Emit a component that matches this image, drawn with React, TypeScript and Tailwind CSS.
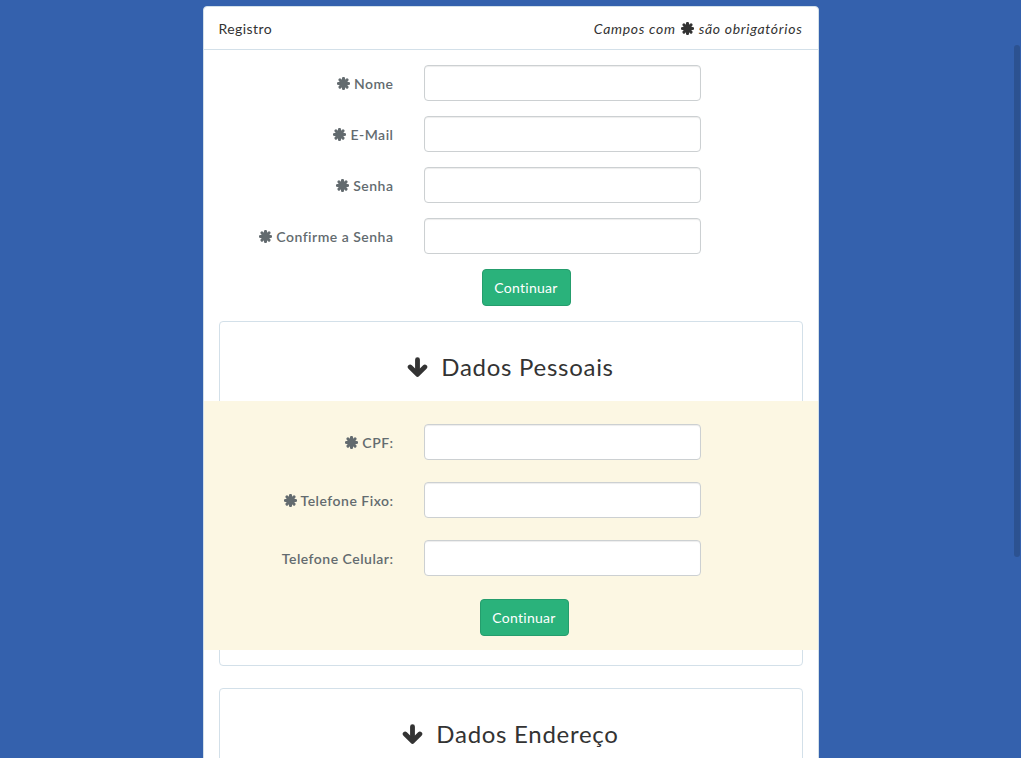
import type { ReactNode } from "react";

const font = { fontFamily: "Lato, 'Open Sans', 'Liberation Sans', sans-serif" };

function Asterisk({ className = "" }: { className?: string }) {
  return (
    <svg viewBox="0 0 12 12" className={className} aria-hidden="true">
      <g stroke="currentColor" strokeWidth="2.8" strokeLinecap="round">
        <line x1="6" y1="1.3" x2="6" y2="10.7" />
        <line x1="1.3" y1="6" x2="10.7" y2="6" />
        <line x1="2.7" y1="2.7" x2="9.3" y2="9.3" />
        <line x1="9.3" y1="2.7" x2="2.7" y2="9.3" />
      </g>
    </svg>
  );
}

function ArrowDown() {
  return (
    <svg viewBox="0 0 20 20" className="h-[21px] w-[21px] text-[#333]" aria-hidden="true">
      <g stroke="currentColor" strokeWidth="4.6" strokeLinecap="round" strokeLinejoin="round" fill="none">
        <line x1="10" y1="2.5" x2="10" y2="15" />
        <polyline points="3,9.5 10,16.5 17,9.5" />
      </g>
    </svg>
  );
}

function Field({ label, required, gap }: { label: string; required?: boolean; gap: string }) {
  return (
    <div className={`flex items-center ${gap}`}>
      <label className="flex w-[190px] items-center justify-end gap-[4px] text-[14px] font-semibold tracking-[0.035em] text-[#636b6f]">
        {required && <Asterisk className="h-[13px] w-[13px]" />}
        {label}
      </label>
      <input className="ml-[30px] h-[36px] w-[277px] rounded-[4px] border border-[#ccd0d2] bg-white shadow-[inset_0_1px_1px_rgba(0,0,0,0.075)] outline-none" />
    </div>
  );
}

function Button({ offset }: { offset: string }) {
  return (
    <button className={`${offset} h-[37px] w-[89px] rounded-[4px] border border-[#259d6d] bg-[#2ab27b] text-[14px] tracking-[0.02em] text-white`}>
      Continuar
    </button>
  );
}

function Section({ title, children }: { title: string; children?: ReactNode }) {
  return (
    <div className="rounded-[4px] border border-[#d3e0e9] bg-white">
      <div className="mb-[17px] mt-[28px] flex h-[34px] items-center justify-center gap-[13px]">
        <ArrowDown />
        <span className="text-[24px] tracking-[0.03em] text-[#333]">{title}</span>
      </div>
      {children}
    </div>
  );
}

export default function App() {
  return (
    <div className="relative h-[758px] overflow-hidden bg-[#3461ad]" style={font}>
      <div className="mx-auto mt-[6px] w-[616px] rounded-t-[4px] border border-[#d3e0e9] bg-white">
        <div className="flex h-[43px] items-center justify-between border-b border-[#d3e0e9] px-[15px] text-[14px] text-[#333]">
          <span className="tracking-[0.03em]">Registro</span>
          <span className="flex items-center gap-[5px] italic tracking-[0.05em]">
            Campos com <Asterisk className="h-[13px] w-[13px]" /> são obrigatórios
          </span>
        </div>

        <div className="pt-[15px]">
          <Field label="Nome" required gap="mb-[15px]" />
          <Field label="E-Mail" required gap="mb-[15px]" />
          <Field label="Senha" required gap="mb-[15px]" />
          <Field label="Confirme a Senha" required gap="mb-[15px]" />
          <div className="flex">
            <Button offset="ml-[278px]" />
          </div>

          <div className="mx-[15px] mt-[15px]">
            <Section title="Dados Pessoais">
              <div className="-mx-[16px] bg-[#fcf7e3] pb-[14px] pt-[23px]">
                <Field label="CPF:" required gap="mb-[22px]" />
                <Field label="Telefone Fixo:" required gap="mb-[22px]" />
                <Field label="Telefone Celular:" gap="mb-[23px]" />
                <div className="flex">
                  <Button offset="ml-[276px]" />
                </div>
              </div>
              <div className="h-[15px]" />
            </Section>

            <div className="mt-[22px]">
              <Section title="Dados Endereço">
                <div className="h-[200px]" />
              </Section>
            </div>
          </div>
        </div>
      </div>

      <div className="absolute right-[1px] top-[45px] h-[512px] w-[6px] rounded-full bg-[#2c5291]" />
    </div>
  );
}
